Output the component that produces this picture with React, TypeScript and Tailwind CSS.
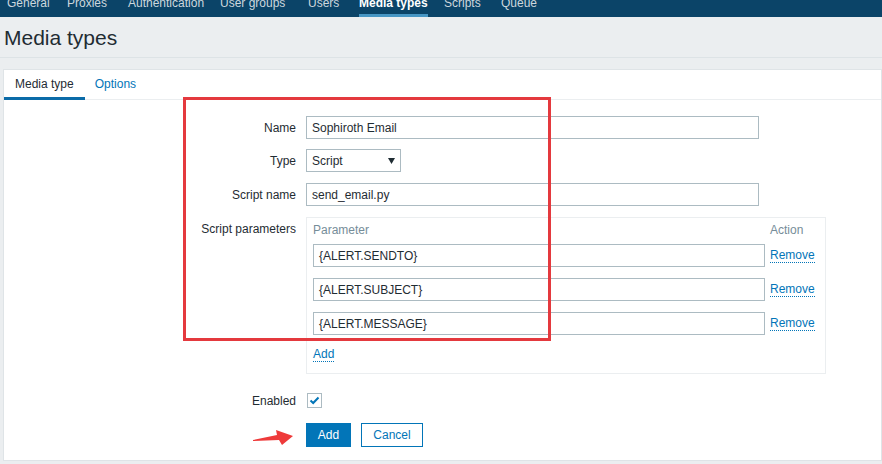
import React from 'react';

const navItems = [
  { label: 'General', w: 'w-[60px]' },
  { label: 'Proxies', w: 'w-[61px]' },
  { label: 'Authentication', w: 'w-[92px]' },
  { label: 'User groups', w: 'w-[88px]' },
  { label: 'Users', w: 'w-[51px]' },
  { label: 'Media types', w: 'w-[85px]', active: true },
  { label: 'Scripts', w: 'w-[57px]' },
  { label: 'Queue', w: 'w-[60px]' },
];

const params = ['{ALERT.SENDTO}', '{ALERT.SUBJECT}', '{ALERT.MESSAGE}'];

const TopNav: React.FC = () => (
  <div className="h-[17px] bg-[#0b4468] overflow-hidden flex pl-[7px]">
    {navItems.map((item) => (
      <div key={item.label} className={`${item.w} h-[17px] shrink-0 flex items-start`}>
        <div
          className={`h-[17px] flex flex-col ${
            item.active ? 'font-bold text-white border-b-[3px] border-[#4796c4]' : 'text-[#cdd7dd]'
          }`}
        >
          <div className="leading-[12px] -mt-[3px] whitespace-nowrap">{item.label}</div>
        </div>
      </div>
    ))}
  </div>
);

const Label: React.FC<{ children: React.ReactNode; top?: boolean }> = ({ children, top }) => (
  <div className={`w-[292px] shrink-0 text-right leading-[14px] ${top ? 'pt-[5px]' : ''}`}>
    {children}
  </div>
);

const TextInput: React.FC<{ value: string; width: string }> = ({ value, width }) => (
  <div
    className={`${width} h-[23px] border border-[#acbbc2] bg-white pl-[5px] flex items-center leading-[14px] text-[#1f2c33]`}
  >
    {value}
  </div>
);

export default function App() {
  return (
    <div className="relative w-[882px] h-[464px] overflow-hidden bg-[#ebeef0] font-['Liberation_Sans',Arial,sans-serif] text-[12px] leading-[14px] text-[#1f2c33]">
      <TopNav />

      {/* page header */}
      <div className="h-[41px] px-[4px] pt-[9px] border-b border-[#dde3e6]">
        <h1 className="text-[21px] leading-[24px] text-[#1f2c33]">Media types</h1>
      </div>
      <div className="h-[11px]" />

      {/* panel */}
      <div className="ml-[3px] bg-white border border-[#dfe4e7] pb-[13px]">
        <div className="flex border-b border-[#ebeef0]">
          <div className="px-[11px] pt-[7px] pb-[6px] leading-[14px] border-b-[3px] border-[#0b6ba8] -mb-px">
            Media type
          </div>
          <div className="px-[10px] pt-[7px] pb-[6px] leading-[14px] text-[#0275b8]">Options</div>
        </div>

        <div className="pt-[16px] flex flex-col">
          <div className="flex items-center gap-[10px]">
            <Label>Name</Label>
            <TextInput value="Sophiroth Email" width="w-[453px]" />
          </div>

          <div className="flex items-center gap-[10px] mt-[10px]">
            <Label>Type</Label>
            <div className="w-[95px] h-[23px] border border-[#acbbc2] bg-white pl-[5px] pr-[5px] flex items-center justify-between leading-[14px]">
              <span>Script</span>
              <svg width="7" height="6" viewBox="0 0 7 6">
                <path d="M0 0 H7 L3.5 6 Z" fill="#1f2c33" />
              </svg>
            </div>
          </div>

          <div className="flex items-center gap-[10px] mt-[11px]">
            <Label>Script name</Label>
            <TextInput value="send_email.py" width="w-[453px]" />
          </div>

          <div className="flex items-start gap-[10px] mt-[11px]">
            <Label top>Script parameters</Label>
            <div className="w-[520px] border border-[#ebeef0] pl-[6px] pt-[5px] pb-[11px]">
              <div className="flex gap-[5px] leading-[14px] text-[#768d99]">
                <div className="w-[452px]">Parameter</div>
                <div>Action</div>
              </div>
              <div className="flex flex-col gap-[11px] mt-[7px]">
                {params.map((p) => (
                  <div key={p} className="flex items-center gap-[5px]">
                    <TextInput value={p} width="w-[452px]" />
                    <span className="leading-[14px] text-[#0275b8] border-b border-dotted border-[#0275b8]">
                      Remove
                    </span>
                  </div>
                ))}
              </div>
              <div className="mt-[12px] flex">
                <span className="leading-[14px] text-[#0275b8] border-b border-dotted border-[#0275b8]">
                  Add
                </span>
              </div>
            </div>
          </div>

          <div className="flex items-center gap-[10px] mt-[19px]">
            <Label>Enabled</Label>
            <div className="w-[15px] h-[15px] ml-[1px] border border-[#acbbc2] bg-white flex items-center justify-center">
              <svg width="11" height="9" viewBox="0 0 11 9">
                <path d="M1.5 4.5 L4.2 7 L9.5 1.5" stroke="#0275b8" strokeWidth="2" fill="none" />
              </svg>
            </div>
          </div>

          <div className="flex gap-[10px] mt-[15px] pl-[302px]">
            <button className="w-[45px] h-[24px] bg-[#0275b8] text-white leading-[14px]">Add</button>
            <button className="w-[62px] h-[24px] bg-white border border-[#0275b8] text-[#0275b8] leading-[14px]">
              Cancel
            </button>
          </div>
        </div>
      </div>

      {/* annotations */}
      <div className="absolute left-[183px] top-[97px] w-[368px] h-[244px] border-[3px] border-[#e4393e] pointer-events-none" />
      <svg className="absolute left-[252px] top-[427px]" width="42" height="20" viewBox="0 0 42 20">
        <polygon points="1,13 25,8 24,3 41,9 30,18 27,13 1,14" fill="#ee3a3a" />
      </svg>
    </div>
  );
}
